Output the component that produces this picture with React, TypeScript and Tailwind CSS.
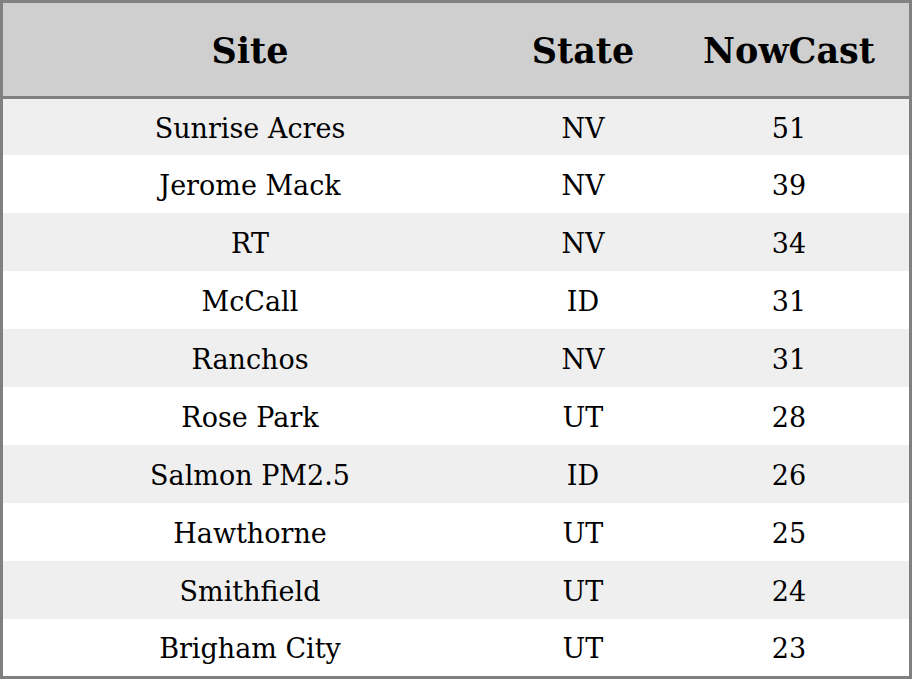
import React from "react";

const rows: [string, string, string][] = [
  ["Sunrise Acres", "NV", "51"],
  ["Jerome Mack", "NV", "39"],
  ["RT", "NV", "34"],
  ["McCall", "ID", "31"],
  ["Ranchos", "NV", "31"],
  ["Rose Park", "UT", "28"],
  ["Salmon PM2.5", "ID", "26"],
  ["Hawthorne", "UT", "25"],
  ["Smithfield", "UT", "24"],
  ["Brigham City", "UT", "23"],
];

export default function App() {
  return (
    <div
      className="w-[912px] h-[679px] border-[3px] border-[#808080] bg-white text-black flex flex-col"
      style={{ fontFamily: '"DejaVu Serif", serif' }}
    >
      <div className="grid grid-cols-[494px_172px_240px] h-[96px] shrink-0 bg-[#cfcfcf] border-b-[3px] border-[#808080] items-center pt-1 text-[35px] font-bold">
        <div className="text-center">Site</div>
        <div className="text-center">State</div>
        <div className="text-center">NowCast</div>
      </div>
      {rows.map((r, i) => (
        <div
          key={i}
          className={`grid grid-cols-[494px_172px_240px] items-center pt-1 text-[27px] ${
            i === 0 ? "h-[56px]" : i === 9 ? "h-[57px]" : "h-[58px]"
          } ${i % 2 === 0 ? "bg-[#efefef]" : "bg-white"}`}
        >
          <div className="text-center">{r[0]}</div>
          <div className="text-center">{r[1]}</div>
          <div className="text-center">{r[2]}</div>
        </div>
      ))}
    </div>
  );
}
